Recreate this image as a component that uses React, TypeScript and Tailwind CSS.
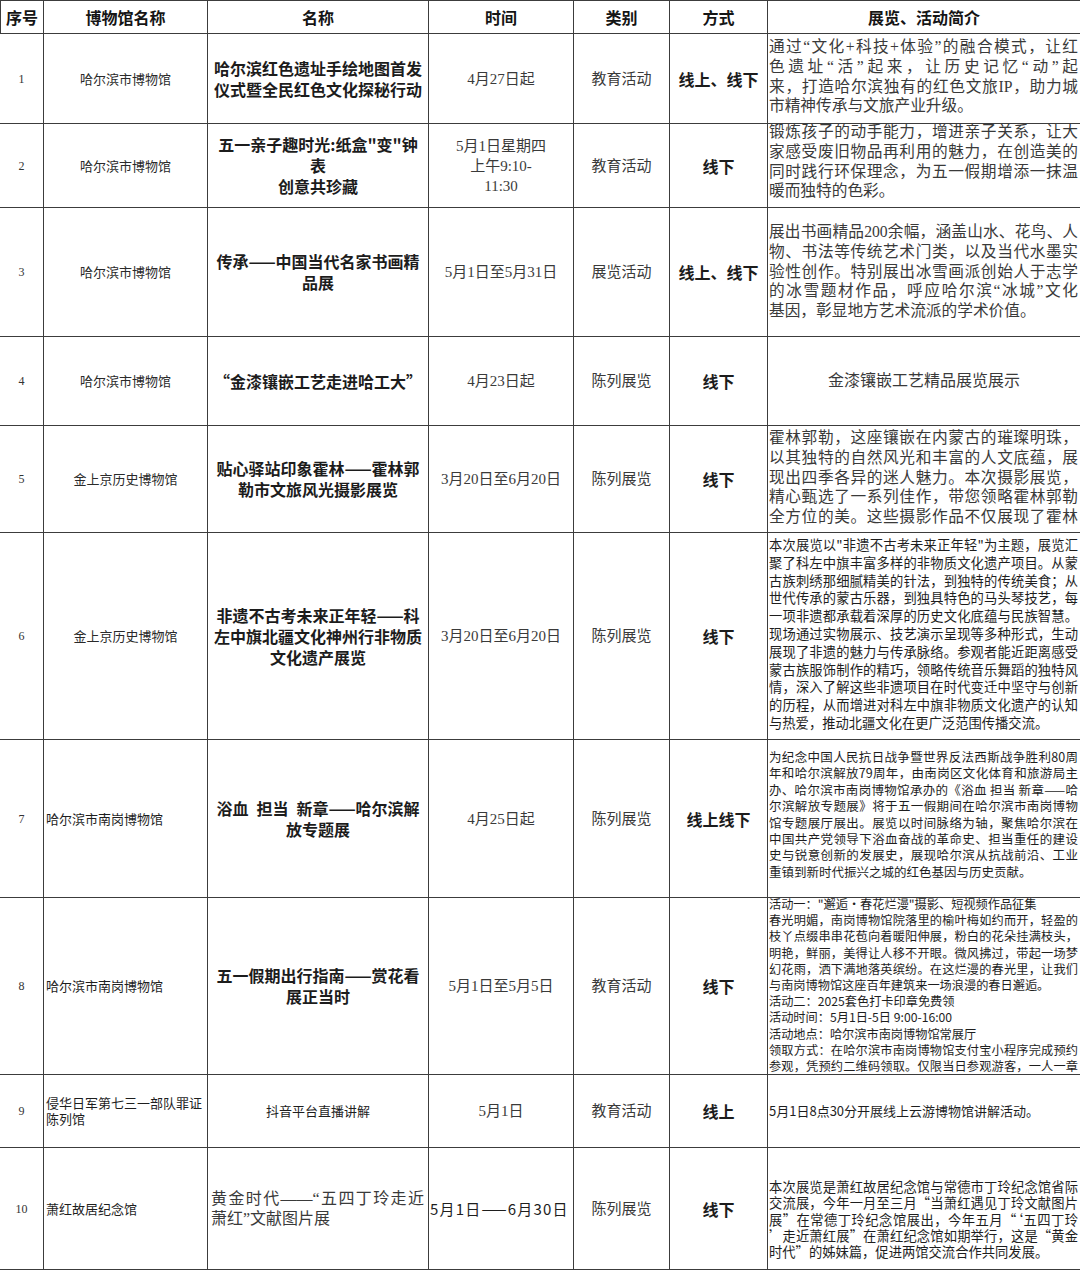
import React from "react";

function C({ last, className = "", children }: { last?: boolean; className?: string; children?: React.ReactNode }) {
  return (
    <div className={`${last ? "border-b" : "border-r border-b"} border-[#3c3c3c] overflow-hidden flex flex-col ${className}`}>
      {children}
    </div>
  );
}

function Para({ lines, className = "", all = false }: { lines: string[]; className?: string; all?: boolean }) {
  return (
    <div className={className}>
      {lines.map((l, i) => {
        const plain = l.startsWith("~");
        const text = plain ? l.slice(1) : l;
        const just = !plain && (all || i < lines.length - 1);
        return (
          <div key={i} className={just ? "text-justify [text-align-last:justify]" : "text-left"}>
            {text}
          </div>
        );
      })}
    </div>
  );
}

const SERIF_GRAY = "font-['Liberation_Serif','Noto_Sans_CJK_SC',serif] text-[#3a3a3a]";
const SANS = "font-['Noto_Sans_CJK_SC','Noto_Sans',sans-serif]";
const BOLD = "font-['Noto_Sans_CJK_SC','Noto_Sans',sans-serif] font-bold text-[#1c1c1c]";

const HEAD = "justify-center items-center font-['Noto_Sans_CJK_SC','Noto_Sans',sans-serif] font-bold text-[#151515] text-[16px] leading-[20px]";

type Row = {
  n: string;
  museum: React.ReactNode;
  title: React.ReactNode;
  time: React.ReactNode;
  cat: string;
  mode: string;
  desc: React.ReactNode;
  descClass: string;
};

const museumC = (t: string) => (
  <div className={`${SANS} text-[13px] leading-[16px] text-[#2a2a2a] text-center`}>{t}</div>
);
const museumL = (lines: string[]) => (
  <div className={`${SANS} text-[13px] leading-[15.7px] text-[#1e1e1e] pl-[2px]`}>
    {lines.map((l, i) => (
      <div key={i}>{l}</div>
    ))}
  </div>
);
const titleB = (lines: string[]) => (
  <div className={`${BOLD} text-[16px] leading-[21px] text-center whitespace-pre`}>
    {lines.map((l, i) => (
      <div key={i}>{l}</div>
    ))}
  </div>
);
const timeS = (lines: string[]) => (
  <div className={`${SERIF_GRAY} text-[15px] leading-[20px] text-center`}>
    {lines.map((l, i) => (
      <div key={i}>{l}</div>
    ))}
  </div>
);

const SERIF_DESC = "font-['Liberation_Serif','Noto_Sans_CJK_SC',serif] text-[#3a3a3a] text-[15.7px] leading-[19.8px] pl-[1px] pr-[2px]";
const SANS_DESC = "font-['Noto_Sans_CJK_SC','Noto_Sans',sans-serif] text-[#1e1e1e] pl-[1px] pr-[2px]";

const rows: Row[] = [
  {
    n: "1",
    museum: museumC("哈尔滨市博物馆"),
    title: titleB(["哈尔滨红色遗址手绘地图首发", "仪式暨全民红色文化探秘行动"]),
    time: timeS(["4月27日起"]),
    cat: "教育活动",
    mode: "线上、线下",
    descClass: "justify-start",
    desc: (
      <Para
        className={`${SERIF_DESC} pt-[3px]`}
        lines={[
          "通过“文化+科技+体验”的融合模式，让红",
          "色遗址“活”起来，让历史记忆“动”起",
          "来，打造哈尔滨独有的红色文旅IP，助力城",
          "市精神传承与文旅产业升级。",
        ]}
      />
    ),
  },
  {
    n: "2",
    museum: museumC("哈尔滨市博物馆"),
    title: titleB(["五一亲子趣时光:纸盒\"变\"钟", "表", "创意共珍藏"]),
    time: timeS(["5月1日星期四", "上午9:10-", "11:30"]),
    cat: "教育活动",
    mode: "线下",
    descClass: "justify-start",
    desc: (
      <Para
        className={`${SERIF_DESC} mt-[-2px]`}
        lines={[
          "锻炼孩子的动手能力，增进亲子关系，让大",
          "家感受废旧物品再利用的魅力，在创造美的",
          "同时践行环保理念，为五一假期增添一抹温",
          "暖而独特的色彩。",
        ]}
      />
    ),
  },
  {
    n: "3",
    museum: museumC("哈尔滨市博物馆"),
    title: titleB(["传承——中国当代名家书画精", "品展"]),
    time: timeS(["5月1日至5月31日"]),
    cat: "展览活动",
    mode: "线上、线下",
    descClass: "justify-start",
    desc: (
      <Para
        className={`${SERIF_DESC} pt-[14px]`}
        lines={[
          "展出书画精品200余幅，涵盖山水、花鸟、人",
          "物、书法等传统艺术门类，以及当代水墨实",
          "验性创作。特别展出冰雪画派创始人于志学",
          "的冰雪题材作品，呼应哈尔滨“冰城”文化",
          "基因，彰显地方艺术流派的学术价值。",
        ]}
      />
    ),
  },
  {
    n: "4",
    museum: museumC("哈尔滨市博物馆"),
    title: titleB(["“金漆镶嵌工艺走进哈工大”"]),
    time: timeS(["4月23日起"]),
    cat: "陈列展览",
    mode: "线下",
    descClass: "justify-center",
    desc: (
      <div className={`${SERIF_GRAY} text-[16px] leading-[20px] text-center`}>金漆镶嵌工艺精品展览展示</div>
    ),
  },
  {
    n: "5",
    museum: museumC("金上京历史博物馆"),
    title: titleB(["贴心驿站印象霍林——霍林郭", "勒市文旅风光摄影展览"]),
    time: timeS(["3月20日至6月20日"]),
    cat: "陈列展览",
    mode: "线下",
    descClass: "justify-start",
    desc: (
      <Para
        all
        className={`${SERIF_DESC} pt-[2px]`}
        lines={[
          "霍林郭勒，这座镶嵌在内蒙古的璀璨明珠，",
          "以其独特的自然风光和丰富的人文底蕴，展",
          "现出四季各异的迷人魅力。本次摄影展览，",
          "精心甄选了一系列佳作，带您领略霍林郭勒",
          "全方位的美。这些摄影作品不仅展现了霍林",
        ]}
      />
    ),
  },
  {
    n: "6",
    museum: museumC("金上京历史博物馆"),
    title: titleB(["非遗不古考未来正年轻——科", "左中旗北疆文化神州行非物质", "文化遗产展览"]),
    time: timeS(["3月20日至6月20日"]),
    cat: "陈列展览",
    mode: "线下",
    descClass: "justify-start",
    desc: (
      <Para
        className={`${SANS_DESC} text-[13.3px] leading-[17.8px] pt-[3px]`}
        lines={[
          "本次展览以\"非遗不古考未来正年轻\"为主题，展览汇",
          "聚了科左中旗丰富多样的非物质文化遗产项目。从蒙",
          "古族刺绣那细腻精美的针法，到独特的传统美食；从",
          "世代传承的蒙古乐器，到独具特色的马头琴技艺，每",
          "一项非遗都承载着深厚的历史文化底蕴与民族智慧。",
          "现场通过实物展示、技艺演示呈现等多种形式，生动",
          "展现了非遗的魅力与传承脉络。参观者能近距离感受",
          "蒙古族服饰制作的精巧，领略传统音乐舞蹈的独特风",
          "情，深入了解这些非遗项目在时代变迁中坚守与创新",
          "的历程，从而增进对科左中旗非物质文化遗产的认知",
          "与热爱，推动北疆文化在更广泛范围传播交流。",
        ]}
      />
    ),
  },
  {
    n: "7",
    museum: museumL(["哈尔滨市南岗博物馆"]),
    title: titleB(["浴血\u2002担当\u2002新章——哈尔滨解", "放专题展"]),
    time: timeS(["4月25日起"]),
    cat: "陈列展览",
    mode: "线上线下",
    descClass: "justify-start",
    desc: (
      <Para
        className={`${SANS_DESC} text-[12.5px] leading-[16.4px] pt-[9px]`}
        lines={[
          "为纪念中国人民抗日战争暨世界反法西斯战争胜利80周",
          "年和哈尔滨解放79周年，由南岗区文化体育和旅游局主",
          "办、哈尔滨市南岗博物馆承办的《浴血 担当 新章——哈",
          "尔滨解放专题展》将于五一假期间在哈尔滨市南岗博物",
          "馆专题展厅展出。展览以时间脉络为轴，聚焦哈尔滨在",
          "中国共产党领导下浴血奋战的革命史、担当重任的建设",
          "史与锐意创新的发展史，展现哈尔滨从抗战前沿、工业",
          "重镇到新时代振兴之城的红色基因与历史贡献。",
        ]}
      />
    ),
  },
  {
    n: "8",
    museum: museumL(["哈尔滨市南岗博物馆"]),
    title: titleB(["五一假期出行指南——赏花看", "展正当时"]),
    time: timeS(["5月1日至5月5日"]),
    cat: "教育活动",
    mode: "线下",
    descClass: "justify-start",
    desc: (
      <Para
        className={`${SANS_DESC} text-[12.2px] leading-[16.2px] mt-[-2px]`}
        lines={[
          "~活动一：\"邂逅·春花烂漫\"摄影、短视频作品征集",
          "春光明媚，南岗博物馆院落里的榆叶梅如约而开，轻盈的",
          "枝丫点缀串串花苞向着暖阳伸展，粉白的花朵挂满枝头，",
          "明艳，鲜丽，美得让人移不开眼。微风拂过，带起一场梦",
          "幻花雨，洒下满地落英缤纷。在这烂漫的春光里，让我们",
          "~与南岗博物馆这座百年建筑来一场浪漫的春日邂逅。",
          "~活动二：2025套色打卡印章免费领",
          "~活动时间：5月1日-5日 9:00-16:00",
          "~活动地点：哈尔滨市南岗博物馆常展厅",
          "领取方式：在哈尔滨市南岗博物馆支付宝小程序完成预约",
          "参观，凭预约二维码领取。仅限当日参观游客，一人一章",
          "。",
        ]}
      />
    ),
  },
  {
    n: "9",
    museum: museumL(["侵华日军第七三一部队罪证", "陈列馆"]),
    title: <div className={`${SANS} text-[13px] leading-[16px] text-[#1e1e1e] text-center`}>抖音平台直播讲解</div>,
    time: timeS(["5月1日"]),
    cat: "教育活动",
    mode: "线上",
    descClass: "justify-center",
    desc: (
      <div className={`${SANS_DESC} text-[13px] leading-[16px]`}>5月1日8点30分开展线上云游博物馆讲解活动。</div>
    ),
  },
  {
    n: "10",
    museum: museumL(["萧红故居纪念馆"]),
    title: (
      <Para
        className={`${SERIF_GRAY} text-[16px] leading-[19.5px] pl-[3px] pr-[4px]`}
        lines={["黄金时代——“五四丁玲走近", "萧红”文献图片展"]}
      />
    ),
    time: (
      <div className={`${SANS} text-[15px] leading-[18px] text-[#1e1e1e] whitespace-nowrap pl-[1px] tracking-[1.2px]`}>
        5月1日——6月30日
      </div>
    ),
    cat: "陈列展览",
    mode: "线下",
    descClass: "justify-start",
    desc: (
      <Para
        className={`${SANS_DESC} text-[13.3px] leading-[16.25px] pt-[31px]`}
        lines={[
          "本次展览是萧红故居纪念馆与常德市丁玲纪念馆省际",
          "交流展，今年一月至三月“当萧红遇见丁玲文献图片",
          "展”在常德丁玲纪念馆展出，今年五月“‘五四丁玲",
          "’走近萧红展”在萧红纪念馆如期举行，这是“黄金",
          "时代”的姊妹篇，促进两馆交流合作共同发展。",
        ]}
      />
    ),
  },
];

export default function App() {
  return (
    <div className="w-[1080px] h-[1271px] bg-white overflow-hidden">
      <div className="grid grid-cols-[44px_164px_221px_145px_96px_98px_312px] grid-rows-[33px_90px_84px_129px_89px_107px_207px_158px_177px_73px_122px] border-t border-[#3c3c3c]">
        <C className={`${HEAD} border-l text-[15px]`}>序号</C>
        <C className={HEAD}>博物馆名称</C>
        <C className={HEAD}>名称</C>
        <C className={HEAD}>时间</C>
        <C className={HEAD}>类别</C>
        <C className={HEAD}>方式</C>
        <C last className={HEAD}>展览、活动简介</C>
        {rows.map((r) => (
          <React.Fragment key={r.n}>
            <C className="justify-center items-center">
              <span className="font-['Liberation_Serif',serif] text-[12px] text-[#333]">{r.n}</span>
            </C>
            <C className="justify-center">{r.museum}</C>
            <C className="justify-center">{r.title}</C>
            <C className="justify-center">{r.time}</C>
            <C className="justify-center items-center">
              <span className={`${SERIF_GRAY} text-[15px] leading-[20px]`}>{r.cat}</span>
            </C>
            <C className="justify-center items-center">
              <span className={`${BOLD} text-[16px] leading-[20px]`}>{r.mode}</span>
            </C>
            <C last className={r.descClass}>
              {r.desc}
            </C>
          </React.Fragment>
        ))}
      </div>
    </div>
  );
}
